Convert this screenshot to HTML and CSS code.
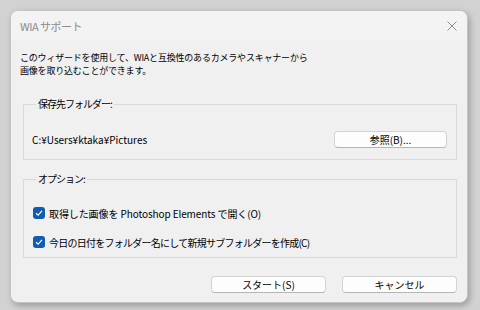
FILE: index.html
```html
<!DOCTYPE html>
<html lang="ja">
<head>
  <meta charset="UTF-8" />
  <title>WIA サポート</title>
  <link rel="stylesheet" href="styles.css">
</head>
<body>
  <div class="window">
    <div class="titlebar">
      <span class="title">WIA サポート</span>
      <svg class="close" width="10" height="10" viewBox="0 0 10 10">
        <path d="M0.5 0.5 L9.5 9.5 M9.5 0.5 L0.5 9.5" stroke="#8c8c8c" stroke-width="1" fill="none" />
      </svg>
    </div>
    <div class="content">
      <p class="intro">このウィザードを使用して、WIAと互換性のあるカメラやスキャナーから<br>画像を取り込むことができます。</p>

      <fieldset class="group group-folder">
        <legend>保存先フォルダー:</legend>
        <div class="folder-row">
          <span class="path">C:¥Users¥ktaka¥Pictures</span>
          <button class="btn btn-browse">参照(B)...</button>
        </div>
      </fieldset>

      <fieldset class="group group-options">
        <legend>オプション:</legend>
        <label class="check">
          <span class="box"><svg width="8" height="8" viewBox="0 0 8 8"><path d="M1 4.2 L3.1 6.2 L7 1.8" stroke="#fff" stroke-width="1.2" fill="none" /></svg></span>
          <span class="check-text">取得した画像を Photoshop Elements で開く(O)</span>
        </label>
        <label class="check">
          <span class="box"><svg width="8" height="8" viewBox="0 0 8 8"><path d="M1 4.2 L3.1 6.2 L7 1.8" stroke="#fff" stroke-width="1.2" fill="none" /></svg></span>
          <span class="check-text tight">今日の日付をフォルダー名にして新規サブフォルダーを作成(C)</span>
        </label>
      </fieldset>

      <div class="actions">
        <button class="btn btn-action">スタート(S)</button>
        <button class="btn btn-action">キャンセル</button>
      </div>
    </div>
  </div>
</body>
</html>
```

FILE: styles.css
```css
* { box-sizing: border-box; margin: 0; padding: 0; }
body {
  background: #d2d2d2;
  font-family: "Noto Sans CJK JP", "DejaVu Sans", sans-serif;
  font-size: 10px;
  color: #000;
  overflow: hidden;
  width: 480px;
  height: 310px;
}
.window {
  margin: 10px 0 0 10px;
  width: 458px;
  height: 293px;
  background: #f0f0f0;
  border: 1px solid #c4c4c4;
  border-radius: 8px;
  box-shadow: 2px 3px 6px rgba(0, 0, 0, 0.25);
  overflow: hidden;
  display: flex;
  flex-direction: column;
}
.titlebar {
  height: 29px;
  background: #f3f3f3;
  display: flex;
  align-items: center;
  justify-content: space-between;
  padding: 0 10px 0 9px;
}
.title {
  font-size: 11px;
  letter-spacing: -0.5px;
  color: #8c8c8c;
}
.content {
  padding: 0 10px 0 9px;
  display: flex;
  flex-direction: column;
}
.intro {
  margin-top: 11px;
  font-size: 9px;
  line-height: 13px;
  letter-spacing: -0.2px;
}
.group {
  margin: 21px 0 0 3px;
  border: 1px solid #dadada;
  padding: 0 8px;
}
.group legend {
  margin-left: 4px;
  padding: 0 2px;
  line-height: 12px;
  letter-spacing: -1px;
}
.group-folder {
  padding-top: 21px;
  padding-bottom: 11px;
}
.folder-row {
  display: flex;
  align-items: center;
  justify-content: space-between;
  padding-right: 1px;
}
.group-options {
  margin-top: 13px;
  padding-top: 21px;
  padding-bottom: 8px;
  display: flex;
  flex-direction: column;
  gap: 15px;
}
.check {
  display: flex;
  align-items: center;
  gap: 4px;
  height: 14px;
  margin-left: 1px;
}
.check-text {
  letter-spacing: -0.1px;
}
.check-text.tight {
  letter-spacing: -0.75px;
}
.box {
  width: 12px;
  height: 12px;
  border-radius: 3px;
  background: #0f5cb0;
  display: flex;
  align-items: center;
  justify-content: center;
}
.btn {
  font-family: inherit;
  font-size: 10px;
  height: 17px;
  background: #fdfdfd;
  border: 1px solid #d3d3d3;
  border-bottom-color: #b5b5b5;
  border-radius: 4px;
  color: #000;
}
.btn-browse {
  width: 113px;
}
.actions {
  margin-top: 18px;
  display: flex;
  justify-content: flex-end;
  gap: 16px;
}
.btn-action {
  width: 115px;
}
```
